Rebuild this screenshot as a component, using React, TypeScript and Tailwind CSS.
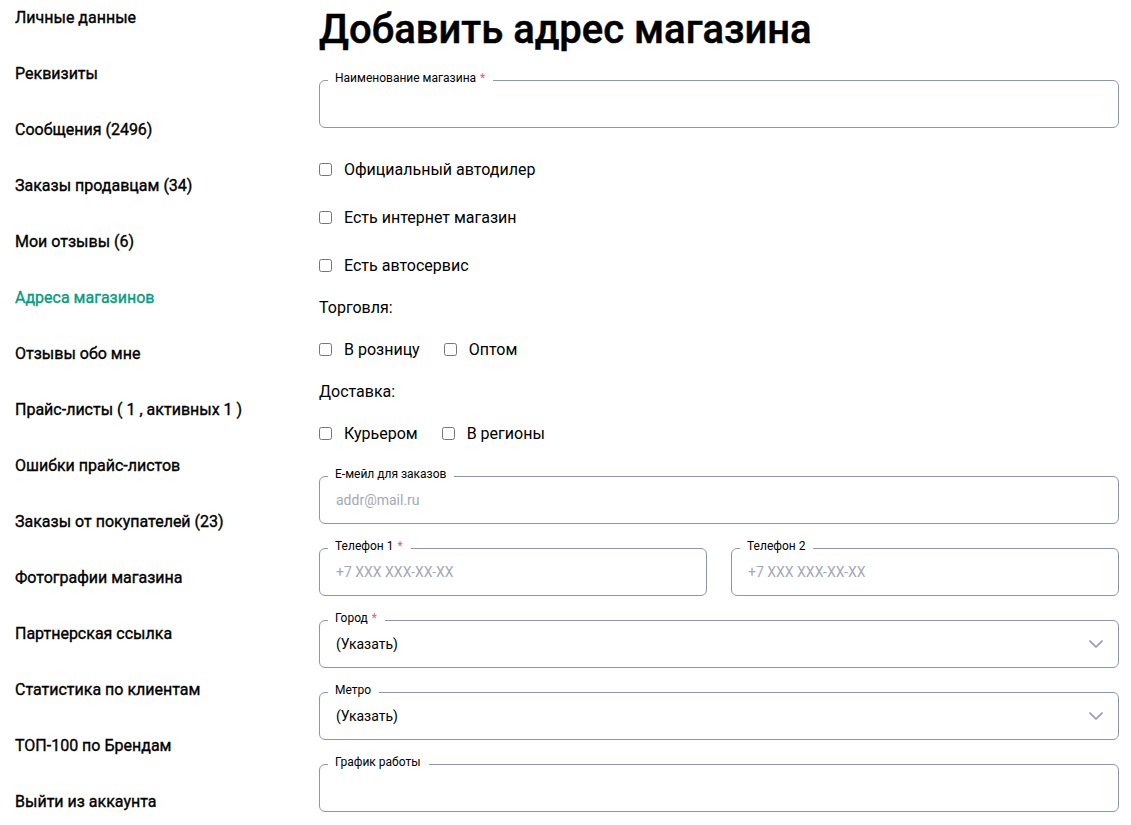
import React from "react";

const menu = [
  "Личные данные",
  "Реквизиты",
  "Сообщения (2496)",
  "Заказы продавцам (34)",
  "Мои отзывы (6)",
  "Адреса магазинов",
  "Отзывы обо мне",
  "Прайс-листы ( 1 , активных 1 )",
  "Ошибки прайс-листов",
  "Заказы от покупателей (23)",
  "Фотографии магазина",
  "Партнерская ссылка",
  "Статистика по клиентам",
  "ТОП-100 по Брендам",
  "Выйти из аккаунта",
];

function Field({
  label,
  required,
  placeholder,
  select,
  className = "",
}: {
  label: string;
  required?: boolean;
  placeholder?: string;
  select?: boolean;
  className?: string;
}) {
  return (
    <div className={"relative h-12 rounded-[6px] border border-[#8c96b0] flex items-center pl-4 pr-[15px] " + className}>
      <span className="absolute left-2 -top-[11px] bg-white pl-[7px] pr-2 text-xs leading-4 text-black whitespace-nowrap">
        {label}
        {required && <span className="text-[#e0606a] ml-px"> *</span>}
      </span>
      {placeholder && <span className="text-[#a3a9b3] text-sm">{placeholder}</span>}
      {select && (
        <>
          <span className="flex-1 text-sm text-black">(Указать)</span>
          <svg width="14" height="8" viewBox="0 0 14 8" fill="none">
            <path d="M0.5 0.5 L7 7 L13.5 0.5" stroke="#929bb3" strokeWidth="1.6" />
          </svg>
        </>
      )}
    </div>
  );
}

function Check({ label }: { label: string }) {
  return (
    <label className="flex items-center h-6">
      <input type="checkbox" className="w-[13px] h-[13px] m-0" />
      <span className="ml-3 relative top-px">{label}</span>
    </label>
  );
}

export default function App() {
  return (
    <div className="flex h-[825px] overflow-hidden bg-white text-black font-['Roboto',sans-serif]">
      <nav className="w-[319px] shrink-0 pl-[15px] pt-[6px] flex flex-col gap-8">
        {menu.map((m) => (
          <a key={m} className={"block h-6 leading-6 text-base font-normal [-webkit-text-stroke:0.35px] " + (m === "Адреса магазинов" ? "text-[#069c82]" : "text-black")}>
            {m}
          </a>
        ))}
      </nav>
      <main className="w-[800px] shrink-0">
        <h1 className="h-[60px] leading-[60px] text-[40px] font-medium [-webkit-text-stroke:0.5px] mb-5">Добавить адрес магазина</h1>
        <Field label="Наименование магазина" required />
        <div className="mt-[29px] flex flex-col gap-6">
          <Check label="Официальный автодилер" />
          <Check label="Есть интернет магазин" />
          <Check label="Есть автосервис" />
        </div>
        <div className="mt-[18px] h-6 leading-6 relative top-px">Торговля:</div>
        <div className="mt-[18px] flex gap-6">
          <Check label="В розницу" />
          <Check label="Оптом" />
        </div>
        <div className="mt-[18px] h-6 leading-6 relative top-px">Доставка:</div>
        <div className="mt-[18px] flex gap-6">
          <Check label="Курьером" />
          <Check label="В регионы" />
        </div>
        <div className="mt-[31px] flex flex-col gap-6">
          <Field label="Е-мейл для заказов" placeholder="addr@mail.ru" />
          <div className="flex gap-6">
            <Field label="Телефон 1" required placeholder="+7 XXX XXX-XX-XX" className="flex-1" />
            <Field label="Телефон 2" placeholder="+7 XXX XXX-XX-XX" className="flex-1" />
          </div>
          <Field label="Город" required select />
          <Field label="Метро" select />
          <Field label="График работы" />
        </div>
      </main>
    </div>
  );
}
